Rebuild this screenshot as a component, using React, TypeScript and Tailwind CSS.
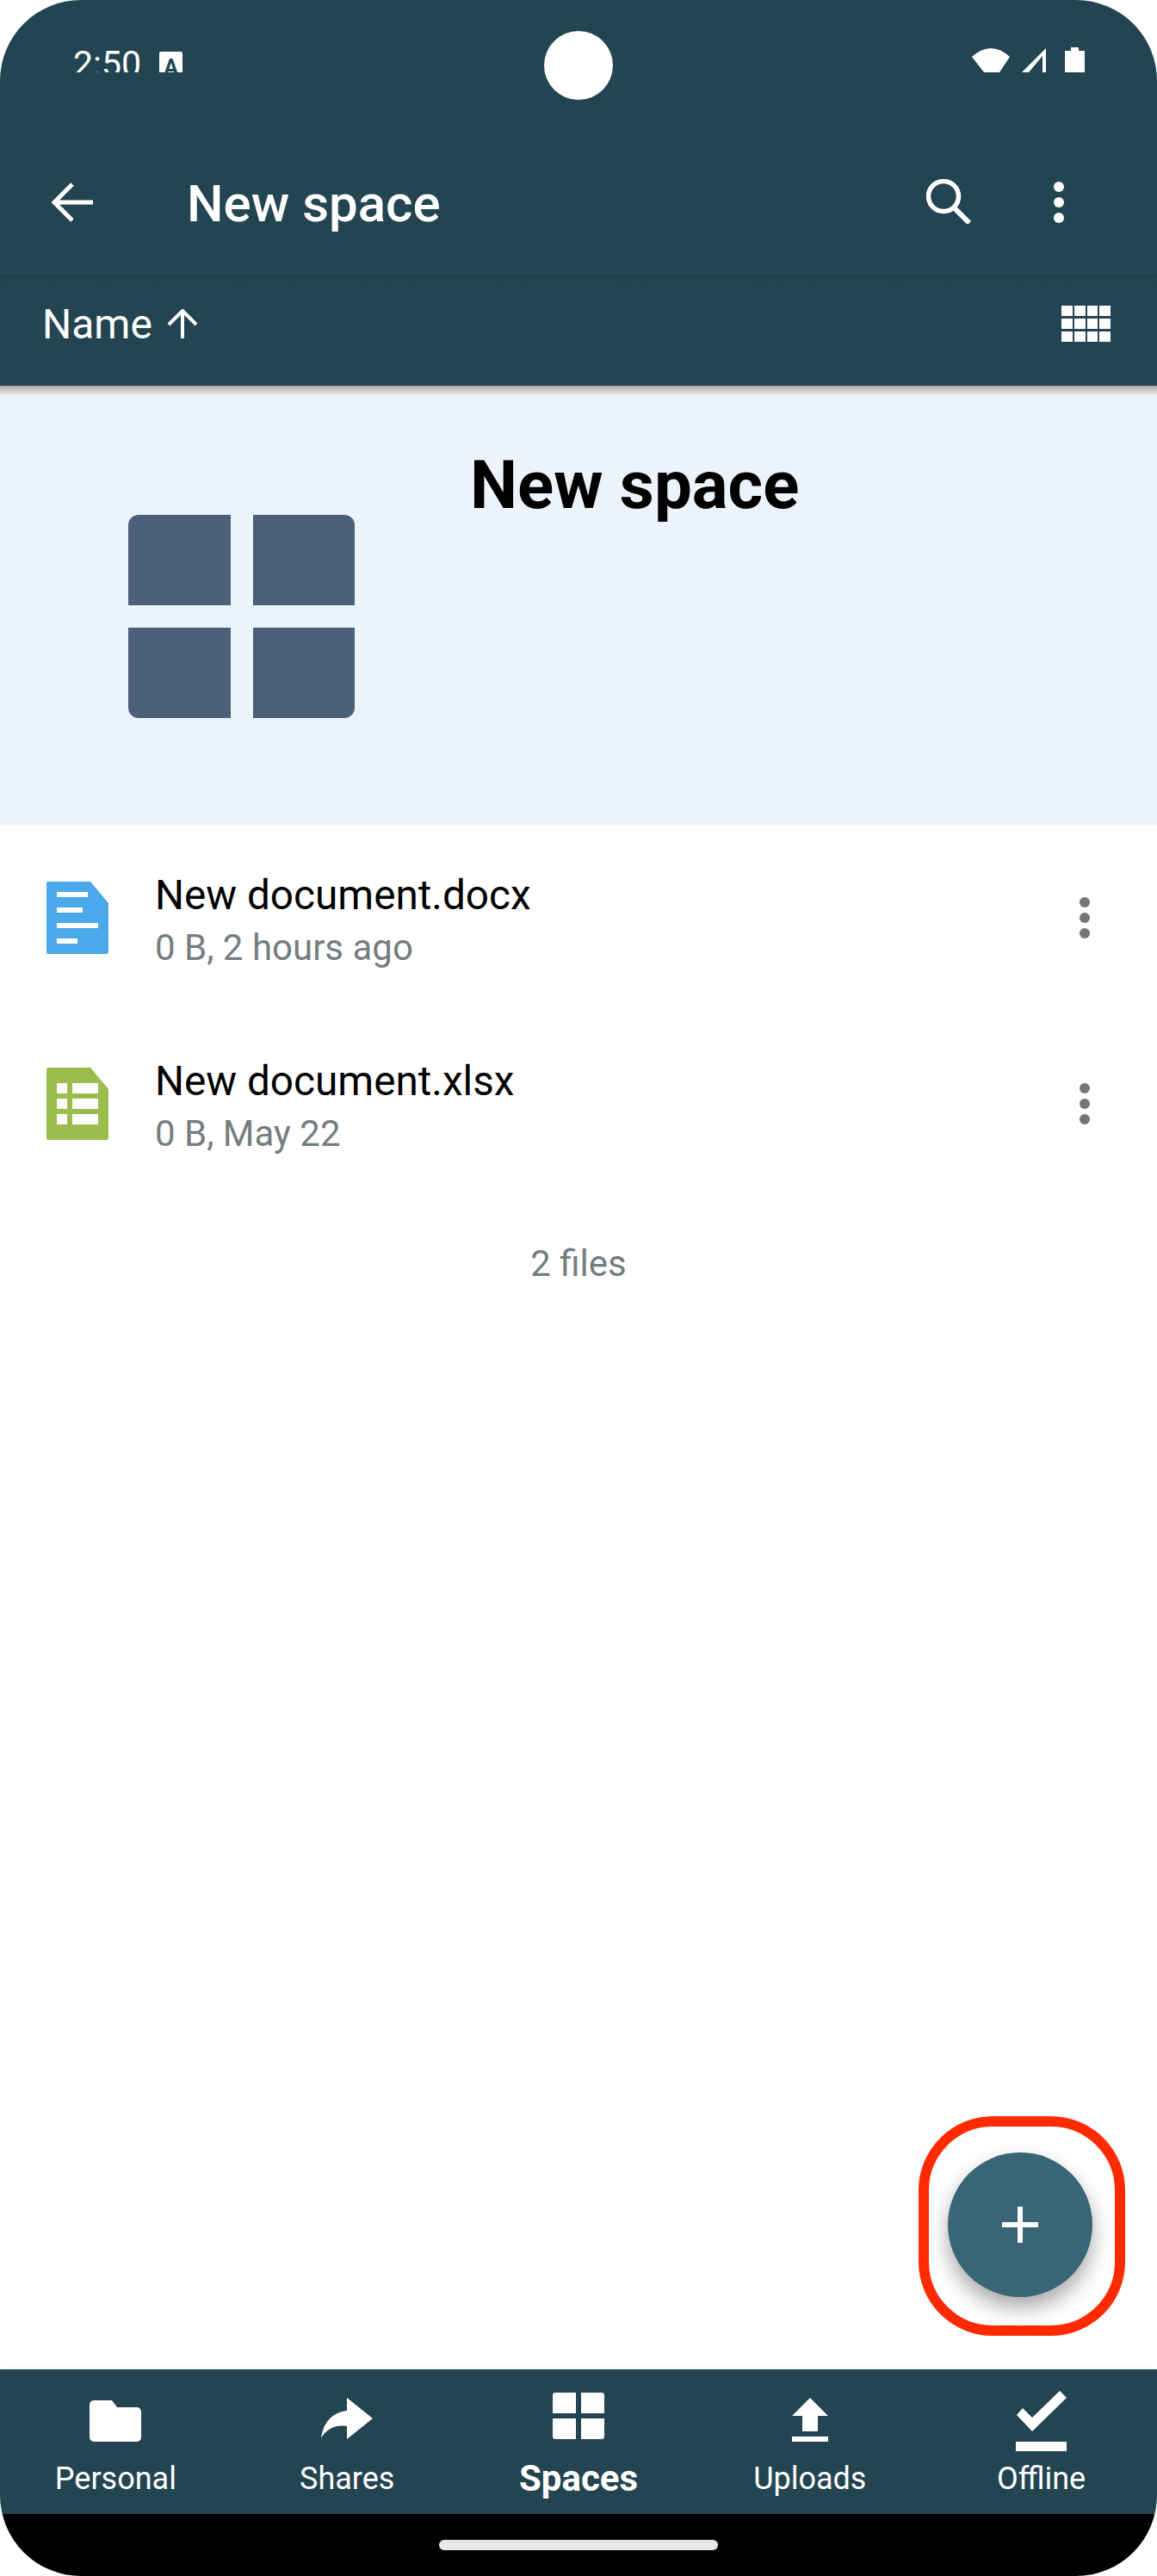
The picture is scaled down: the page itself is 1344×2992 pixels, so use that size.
const font = "font-['Roboto',sans-serif]";

function StatusBar() {
  return (
    <div className="h-[84px] overflow-hidden flex justify-between items-start">
      <div className="flex items-start pl-[85px] pt-[60px]">
        <span className="text-[41px] leading-[29px] text-white">2:50</span>
        <div className="ml-[21px] w-[27px] h-[30px] bg-white rounded-[2px] flex items-start justify-center">
          <span className="text-[25px] leading-[30px] mt-[4px] font-bold text-[#234451]">A</span>
        </div>
      </div>
      <svg width="132" height="84" viewBox="0 0 132 84" className="mr-[83px]" fill="white">
        <path d="M0 66Q22 46 44 66L32 84H14Z" />
        <path d="M58 84L86 56V84H82V65L66 84Z" />
        <path d="M115 55h9v4h7v25h-23V59h7z" />
      </svg>
    </div>
  );
}

function AppBar() {
  return (
    <div className="h-[235px] flex items-start">
      <svg width="48" height="46" viewBox="0 0 48 46" fill="none" stroke="white" strokeWidth="5" className="ml-[60px] mt-[128px]">
        <path d="M48 23H4M24 2L3 23l21 21" />
      </svg>
      <span className="ml-[109px] mt-[118px] text-[60px] leading-[70px] font-medium text-white">New space</span>
      <div className="flex-1" />
      <svg width="52" height="52" viewBox="0 0 52 52" fill="none" stroke="white" strokeWidth="5.5" className="mt-[124px]">
        <ellipse cx="20" cy="20" rx="17.5" ry="17.5" />
        <path d="M32 33l18 18" strokeWidth="6" />
      </svg>
      <div className="ml-[96px] mr-[108px] mt-[127px] flex flex-col gap-[6px]">
        <div className="w-3 h-3 rounded-full bg-white" />
        <div className="w-3 h-3 rounded-full bg-white" />
        <div className="w-3 h-3 rounded-full bg-white" />
      </div>
    </div>
  );
}

function SortBar() {
  return (
    <div className="h-[129px] bg-linear-to-b from-[#203f4b] to-[#234451] to-[9%] flex items-start justify-between pl-[49px] pr-[54px]">
      <div className="flex items-start">
        <span className="text-[48px] leading-[56px] text-white mt-[30px]">Name</span>
        <svg width="36" height="34" viewBox="0 0 36 34" fill="none" stroke="white" strokeWidth="4" className="ml-[17px] mt-[40px]">
          <path d="M18 34V3M2 18L18 2l16 16" />
        </svg>
      </div>
      <div className="grid grid-cols-4 gap-x-[2px] gap-y-[3px] w-[57px] mt-[36px]">
        {Array.from({ length: 12 }).map((_, i) => (
          <div key={i} className="h-3 bg-white" />
        ))}
      </div>
    </div>
  );
}

function SpaceHeader() {
  return (
    <div className="h-[498px] bg-[#ecf3fb] flex items-start">
      <div className="grid grid-cols-2 gap-[26px] w-[263px] ml-[149px] mt-[138px]">
        <div className="h-[105px] bg-[#4c6079] rounded-tl-xl" />
        <div className="h-[105px] bg-[#4c6079] rounded-tr-xl" />
        <div className="h-[105px] bg-[#4c6079] rounded-bl-xl" />
        <div className="h-[105px] bg-[#4c6079] rounded-br-xl" />
      </div>
      <h1 className="ml-[134px] mt-[62px] text-[78px] leading-[84px] font-bold text-black">New space</h1>
    </div>
  );
}

function DocIcon() {
  return (
    <svg width="72" height="84" viewBox="0 0 72 84" className="shrink-0">
      <path d="M2 0H51L72 25V82a2 2 0 0 1-2 2H2a2 2 0 0 1-2-2V2a2 2 0 0 1 2-2Z" fill="#4aa9ea" />
      <path d="M12 12h36v6H12zM12 30h30v6H12zM12 48h48v6H12zM12 66h24v6H12z" fill="white" />
    </svg>
  );
}

function SheetIcon() {
  return (
    <svg width="72" height="84" viewBox="0 0 72 84" className="shrink-0">
      <path d="M2 0H51L72 25V82a2 2 0 0 1-2 2H2a2 2 0 0 1-2-2V2a2 2 0 0 1 2-2Z" fill="#9bbd4e" />
      <path d="M12 18h12v12H12zM30 18h30v12H30zM12 36h12v12H12zM30 36h30v12H30zM12 54h12v12H12zM30 54h30v12H30z" fill="white" />
    </svg>
  );
}

function FileRow({ icon, name, meta }: { icon: React.ReactNode; name: string; meta: string }) {
  return (
    <div className="h-[216px] flex items-start pl-[54px] pr-[78px]">
      <div className="mt-[66px]">{icon}</div>
      <div className="ml-[54px] flex-1 mt-[54px]">
        <div className="text-[47.7px] leading-[56px] text-black">{name}</div>
        <div className="text-[42px] leading-[48px] text-[#757e7f] mt-[9px]">{meta}</div>
      </div>
      <div className="mt-[84px] flex flex-col gap-[6px]">
        <div className="w-3 h-3 rounded-full bg-[#757575]" />
        <div className="w-3 h-3 rounded-full bg-[#757575]" />
        <div className="w-3 h-3 rounded-full bg-[#757575]" />
      </div>
    </div>
  );
}

function Fab() {
  return (
    <div className="absolute left-[1067px] top-[2458px] w-[240px] h-[255px] rounded-[86px] border-[12px] border-[#ff2a00] flex items-center justify-center">
      <div className="w-[168px] h-[168px] -translate-x-[2px] -translate-y-[2px] rounded-full bg-[#3a6577] shadow-[0_12px_24px_rgba(0,0,0,0.35)] flex items-center justify-center">
        <svg width="42" height="42" viewBox="0 0 42 42" fill="white">
          <path d="M18 0h6v18h18v6H24v18h-6V24H0v-6h18z" />
        </svg>
      </div>
    </div>
  );
}

function NavItem({ icon, label, active }: { icon: React.ReactNode; label: string; active?: boolean }) {
  return (
    <div className="flex flex-col items-center h-[168px]">
      <div className="h-[100px] flex items-end">{icon}</div>
      <span className={active ? "mt-[3px] text-[42px] leading-[48px] font-bold text-white" : "mt-[3px] text-[36px] leading-[48px] text-white"}>
        {label}
      </span>
    </div>
  );
}

export default function App() {
  return (
    <div className={`relative w-[1344px] h-[2992px] bg-white rounded-[94px] overflow-hidden flex flex-col ${font}`}>
      <div className="bg-[#234451]">
        <StatusBar />
        <AppBar />
        <SortBar />
      </div>
      {/* camera */}
      <div className="absolute left-[632px] top-[36px] w-20 h-20 rounded-full bg-white" />
      <div className="h-3 bg-linear-to-b from-[#a8a8a8] to-[#f6f6f6]" />
      <SpaceHeader />
      <div className="flex-1 flex flex-col">
        <FileRow icon={<DocIcon />} name="New document.docx" meta="0 B, 2 hours ago" />
        <FileRow icon={<SheetIcon />} name="New document.xlsx" meta="0 B, May 22" />
        <div className="text-center text-[42px] leading-[48px] text-[#757e7f] mt-[54px]">2 files</div>
      </div>
      <Fab />
      <div className="h-[168px] bg-[#234451] grid grid-cols-5 shadow-[0_-2px_4px_rgba(0,0,0,0.04)]">
        <NavItem
          label="Personal"
          icon={
            <svg width="60" height="48" viewBox="0 0 60 48" fill="white" className="mb-[16px]">
              <path d="M5 0h21l6 8h23a5 5 0 0 1 5 5v30a5 5 0 0 1-5 5H5a5 5 0 0 1-5-5V5a5 5 0 0 1 5-5z" />
            </svg>
          }
        />
        <NavItem
          label="Shares"
          icon={
            <svg width="60" height="48" viewBox="0 0 60 48" fill="white" className="mb-[19px]">
              <path d="M30 0L60 24L30 48V33C15 31 6 37 0 47C2 30 12 17 30 15Z" />
            </svg>
          }
        />
        <NavItem
          active
          label="Spaces"
          icon={
            <div className="grid grid-cols-2 gap-[6px] w-[60px] mb-[19px]">
              <div className="h-6 bg-white rounded-tl-[3px]" />
              <div className="h-6 bg-white rounded-tr-[3px]" />
              <div className="h-6 bg-white rounded-bl-[3px]" />
              <div className="h-6 bg-white rounded-br-[3px]" />
            </div>
          }
        />
        <NavItem
          label="Uploads"
          icon={
            <svg width="42" height="51" viewBox="0 0 42 51" fill="white" className="mb-[16px]">
              <path d="M21 0L42 21H30V39H12V21H0ZM0 45h42v6H0z" />
            </svg>
          }
        />
        <NavItem
          label="Offline"
          icon={
            <svg width="60" height="70" viewBox="0 0 60 70" fill="white" className="mb-[5px]">
              <path d="M51 0L59 8L19 47L1 28L8 20L19 31ZM0 59h59v11H0z" />
            </svg>
          }
        />
      </div>
      <div className="h-[72px] bg-black flex justify-center pt-[30px]">
        <div className="w-[324px] h-3 rounded-full bg-[#e8e8e8]" />
      </div>
    </div>
  );
}
